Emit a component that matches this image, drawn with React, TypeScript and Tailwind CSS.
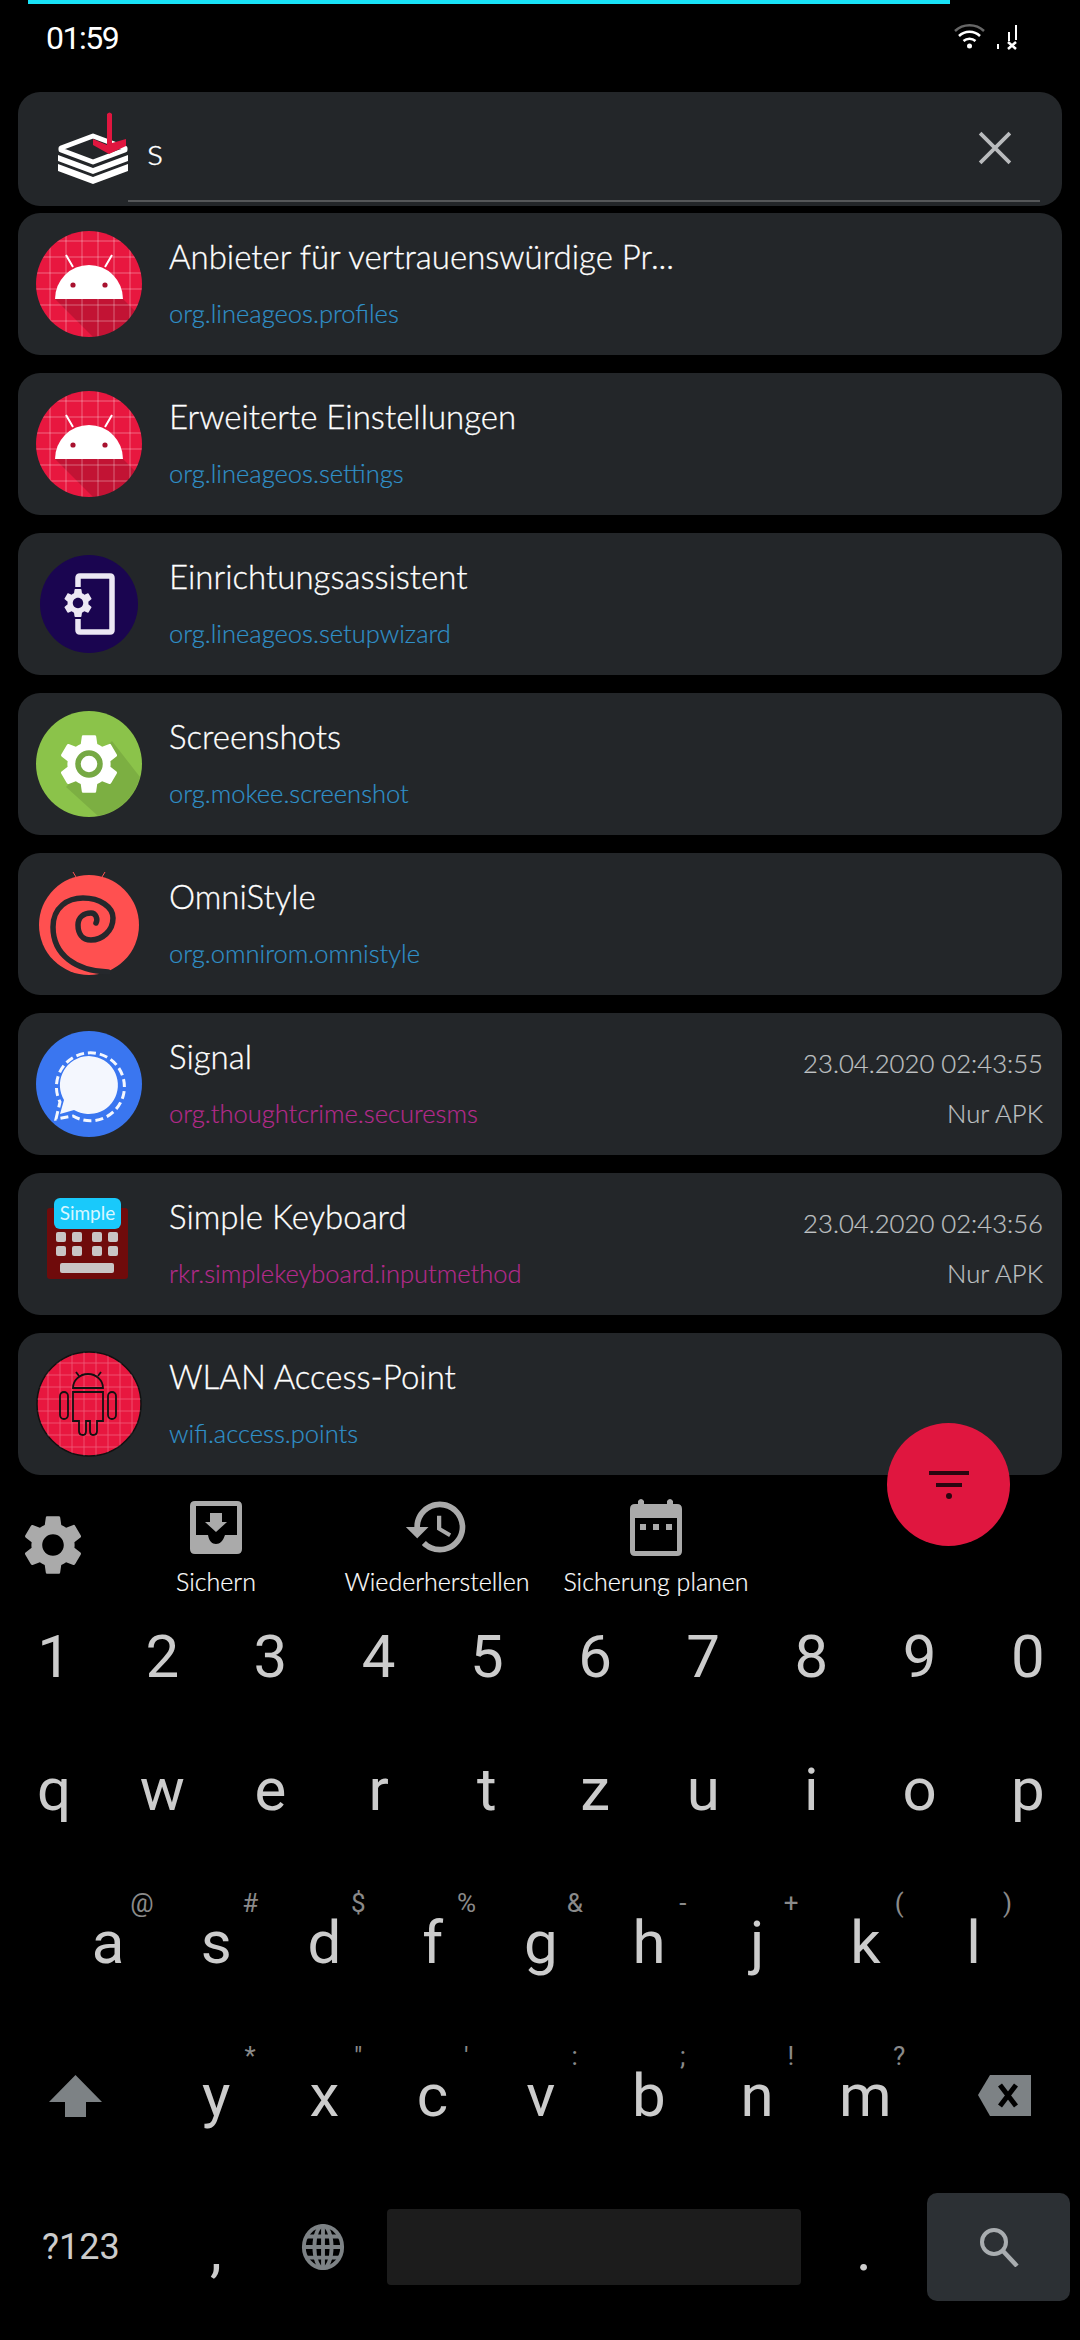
import type { ReactNode } from "react";

const appFont = "font-['Lato',sans-serif]";
const keyFont = "font-['Roboto',sans-serif]";

const gearPath =
  "M19.14 12.94c.04-.3.06-.61.06-.94 0-.32-.02-.64-.07-.94l2.03-1.58a.49.49 0 0 0 .12-.61l-1.92-3.32a.488.488 0 0 0-.59-.22l-2.39.96c-.5-.38-1.03-.7-1.62-.94l-.36-2.54a.484.484 0 0 0-.48-.41h-3.84c-.24 0-.43.17-.47.41l-.36 2.54c-.59.24-1.13.57-1.62.94l-2.39-.96c-.22-.08-.47 0-.59.22L2.74 8.87c-.12.21-.08.47.12.61l2.03 1.58c-.05.3-.09.63-.09.94s.02.64.07.94l-2.03 1.58a.49.49 0 0 0-.12.61l1.92 3.32c.12.22.37.29.59.22l2.39-.96c.5.38 1.03.7 1.62.94l.36 2.54c.05.24.24.41.48.41h3.84c.24 0 .44-.17.47-.41l.36-2.54c.59-.24 1.13-.56 1.62-.94l2.39.96c.22.08.47 0 .59-.22l1.92-3.32c.12-.22.07-.47-.12-.61l-2.01-1.58zM12 15.6c-1.98 0-3.6-1.62-3.6-3.6s1.62-3.6 3.6-3.6 3.6 1.62 3.6 3.6-1.62 3.6-3.6 3.6z";

interface AppRow {
  title: string;
  pkg: string;
  icon: ReactNode;
  magenta?: boolean;
  date?: string;
}

const RedAndroid = () => (
  <svg viewBox="0 0 106 106" className="h-[106px] w-[106px]">
    <defs>
      <clipPath id="rc">
        <circle cx="53" cy="53" r="53" />
      </clipPath>
    </defs>
    <g clipPath="url(#rc)">
      <rect width="106" height="106" fill="#e8173f" />
      <path d="M19 68 L87 68 L106 87 L106 106 L57 106 Z" fill="#000" opacity="0.16" />
      {[14, 30, 46, 62, 78, 94].map((x) => (
        <path key={x} d={`M${x} 0V106`} stroke="#fff" strokeWidth="1" opacity="0.35" />
      ))}
      {[10, 26, 42, 58, 74, 90].map((y) => (
        <path key={y} d={`M0 ${y}H106`} stroke="#fff" strokeWidth="1" opacity="0.35" />
      ))}
      <path d="M19 68 A34 34 0 0 1 87 68 Z" fill="#fff" />
      <path d="M37 36 L30 24 M69 36 L76 24" stroke="#fff" strokeWidth="2" />
      <circle cx="37" cy="54" r="2.6" fill="#a8122f" />
      <circle cx="69" cy="54" r="2.6" fill="#a8122f" />
    </g>
  </svg>
);

const SetupIcon = () => (
  <svg viewBox="0 0 106 106" className="h-[106px] w-[106px]">
    <circle cx="53" cy="53" r="49" fill="#1a0550" />
    <path d="M42 36 V27 Q42 25 44 25 H74 Q76 25 76 27 V79 Q76 81 74 81 H44 Q42 81 42 79 V68" fill="none" stroke="#ece8f4" strokeWidth="5.5" />
    <g transform="translate(24.6 34.6) scale(1.45)">
      <path d={gearPath} fill="#ece8f4" />
    </g>
  </svg>
);

const GreenGear = () => (
  <svg viewBox="0 0 106 106" className="h-[106px] w-[106px]">
    <circle cx="53" cy="53" r="53" fill="#8bc34a" />
    <path d="M30 76 L76 30 L104 66 A53 53 0 0 1 62 105 Z" fill="#000" opacity="0.1" />
    <g transform="translate(17 17) scale(3)">
      <path d={gearPath} fill="#fff" />
    </g>
    <circle cx="53" cy="53" r="11" fill="#fff" stroke="#76a944" strokeWidth="5.5" />
  </svg>
);

const Swirl = () => (
  <svg viewBox="0 0 106 106" className="h-[106px] w-[106px]">
    <path d="M37 1 L40 6 M69 1 L66 6" stroke="#ff5050" strokeWidth="1" />
    <circle cx="53" cy="54" r="50" fill="#ff5050" />
    <path
      d="M72 101 C40 100 17 84 17 56 C17 36 32 27 47 27 C64 27 77 36 77 47 C77 60 66 69 55 69 C46 69 42 62 42 54 C42 46 48 42 55 42 C60 42 62 48 60 52"
      fill="none"
      stroke="#25282c"
      strokeWidth="5.5"
      strokeLinecap="round"
    />
  </svg>
);

const SignalIcon = () => (
  <svg viewBox="0 0 106 106" className="h-[106px] w-[106px]">
    <circle cx="53" cy="53" r="53" fill="#3a76f0" />
    <path d="M24 83 L28 69 A29 29 0 1 1 38 79 Z" fill="#f4f7fe" />
    <path d="M20 88 L24 71 A34 34 0 1 1 37 85 Z" fill="none" stroke="#f4f7fe" strokeWidth="3" strokeDasharray="8 4" />
  </svg>
);

const KeyboardIcon = () => (
  <svg viewBox="0 0 106 106" className="h-[106px] w-[106px]">
    <rect x="11" y="17" width="81" height="71" rx="3" fill="#6f0b0b" />
    {[41, 55].map((y) =>
      [20, 36, 56, 72].map((x) => (
        <rect key={`${y}-${x}`} x={x} y={y} width="10" height="10" rx="2" fill="#c9c5c5" />
      )),
    )}
    <rect x="24" y="72" width="54" height="10" rx="2" fill="#c9c5c5" />
    <rect x="18" y="7" width="67" height="31" rx="6" fill="#19c9fb" />
  </svg>
);

const WifiAndroid = () => (
  <svg viewBox="0 0 106 106" className="h-[106px] w-[106px]">
    <defs>
      <clipPath id="wc">
        <circle cx="53" cy="53" r="52" />
      </clipPath>
    </defs>
    <circle cx="53" cy="53" r="52" fill="#e8173f" stroke="#111" strokeWidth="1.5" />
    <g stroke="#fff" strokeWidth="0.8" opacity="0.3" clipPath="url(#wc)">
      {[12, 24, 36, 48, 60, 72, 84, 96].map((p) => (
        <path key={p} d={`M${p} 0V106M0 ${p}H106`} />
      ))}
    </g>
    <g fill="none" stroke="#111" strokeWidth="1.8">
      <path d="M37 37 A15 14 0 0 1 67 37 Z" />
      <path d="M43 25 L40 21 M62 25 L65 21" />
      <path d="M37 41 H67 V70 H61 V80 Q61 84 57 84 Q54 84 54 80 V70 H50 V80 Q50 84 47 84 Q43 84 43 80 V70 H37 Z" />
      <rect x="24" y="41" width="8" height="27" rx="4" />
      <rect x="72" y="41" width="8" height="27" rx="4" />
    </g>
  </svg>
);

const apps: AppRow[] = [
  { title: "Anbieter für vertrauenswürdige Pr...", pkg: "org.lineageos.profiles", icon: <RedAndroid /> },
  { title: "Erweiterte Einstellungen", pkg: "org.lineageos.settings", icon: <RedAndroid /> },
  { title: "Einrichtungsassistent", pkg: "org.lineageos.setupwizard", icon: <SetupIcon /> },
  { title: "Screenshots", pkg: "org.mokee.screenshot", icon: <GreenGear /> },
  { title: "OmniStyle", pkg: "org.omnirom.omnistyle", icon: <Swirl /> },
  { title: "Signal", pkg: "org.thoughtcrime.securesms", icon: <SignalIcon />, magenta: true, date: "23.04.2020 02:43:55" },
  { title: "Simple Keyboard", pkg: "rkr.simplekeyboard.inputmethod", icon: <KeyboardIcon />, magenta: true, date: "23.04.2020 02:43:56" },
  { title: "WLAN Access-Point", pkg: "wifi.access.points", icon: <WifiAndroid /> },
];

const Row = ({ app }: { app: AppRow }) => (
  <div className="flex h-[142px] shrink-0 items-center rounded-[22px] bg-[#232629] pl-[18px] pr-[19px]">
    <div className="relative h-[106px] w-[106px] shrink-0">
      {app.icon}
      {app.title === "Simple Keyboard" && (
        <span className={`absolute left-[18px] top-[7px] flex h-[31px] w-[67px] items-center justify-center text-[19px] text-[#d8f6ff] ${appFont}`}>
          Simple
        </span>
      )}
    </div>
    <div className={`ml-[27px] flex min-w-0 flex-1 flex-col gap-[20px] pb-[3px] ${appFont}`}>
      <div className="text-[33px] font-light leading-[41px] text-white [-webkit-text-stroke:0.3px]">{app.title}</div>
      <div className={`text-[25.5px] font-light leading-[33px] [-webkit-text-stroke:0.2px] ${app.magenta ? "text-[#b52a8c]" : "text-[#3090c8]"}`}>
        {app.pkg}
      </div>
    </div>
    {app.date && (
      <div className={`flex flex-col items-end gap-[20px] pt-[7px] text-[25.7px] font-light leading-[30px] text-[#bfc1c3] [-webkit-text-stroke:0.2px] ${appFont}`}>
        <span>{app.date}</span>
        <span>Nur APK</span>
      </div>
    )}
  </div>
);

const ToolButton = ({ label, icon, width }: { label: string; icon: ReactNode; width: string }) => (
  <div className={`flex flex-col items-center ${width}`}>
    <div className="flex h-[54px] items-center">{icon}</div>
    <span className={`mt-[12px] whitespace-nowrap text-[25px] font-light leading-[30px] text-white [-webkit-text-stroke:0.2px] ${appFont}`}>{label}</span>
  </div>
);

const digits = ["1", "2", "3", "4", "5", "6", "7", "8", "9", "0"];
const qRow = ["q", "w", "e", "r", "t", "z", "u", "i", "o", "p"];
const aRow = [["a", "@"], ["s", "#"], ["d", "$"], ["f", "%"], ["g", "&"], ["h", "-"], ["j", "+"], ["k", "("], ["l", ")"]];
const yRow = [["y", "*"], ["x", '"'], ["c", "'"], ["v", ":"], ["b", ";"], ["n", "!"], ["m", "?"]];

const Key = ({ ch, hint }: { ch: string; hint?: string }) => (
  <div className={`relative flex h-full w-[108.2px] shrink-0 items-center justify-center text-[60px] font-normal leading-none text-[#cccccc] ${keyFont}`}>
    {ch}
    {hint && (
      <span className="absolute left-[88px] top-[22px] -translate-x-1/2 text-[26px] font-normal leading-[30px] text-[#8a8a8a]">{hint}</span>
    )}
  </div>
);

export default function App() {
  return (
    <div className="relative flex h-[2340px] w-[1080px] flex-col overflow-hidden bg-black">
      {/* status bar */}
      <div className="ml-[28px] h-[4px] w-[922px] shrink-0 bg-[#19e3f8]" />
      <div className="flex h-[88px] shrink-0 items-start justify-between pl-[46px] pr-[56px] pt-[16px]">
        <span className={`text-[32px] leading-[36px] tracking-[-1.5px] text-white ${keyFont}`}>01:59</span>
        <svg viewBox="0 0 70 30" className="mt-[2px] h-[30px] w-[70px]">
          <g fill="none">
            <path d="M1 9 A21 21 0 0 1 30 9" stroke="#666" strokeWidth="2.5" />
            <path d="M5 14 A15 15 0 0 1 26 14" stroke="#fff" strokeWidth="2.5" />
            <path d="M9.5 19 A9 9 0 0 1 21.5 19" stroke="#fff" strokeWidth="2.5" />
          </g>
          <circle cx="15.5" cy="24" r="2.5" fill="#fff" />
          <path d="M44 27V22M55 19V10M62 18V3" stroke="#fff" strokeWidth="2" />
          <path d="M54 20L62 27M62 20L54 27" stroke="#fff" strokeWidth="2.5" />
        </svg>
      </div>

      {/* list */}
      <div className="flex flex-col gap-[18px] px-[18px]">
        <div className="relative -mb-[11px] flex h-[114px] shrink-0 items-center rounded-[22px] bg-[#232629] pr-[50px]">
          <svg viewBox="0 0 72 74" className="ml-[39px] mt-[20px] h-[74px] w-[72px] shrink-0 self-start">
            <path d="M36 24 L68 36 V38 L36 50 L4 38 V36 Z" fill="#232629" stroke="#fff" strokeWidth="5" strokeLinejoin="round" />
            <path d="M1 43 L36 56 L71 43 V49 L36 62 L1 49 Z" fill="#fff" />
            <path d="M1 52 L36 65 L71 52 V59 L36 72 L1 59 Z" fill="#fff" />
            <path d="M36 27 L50 33 V2 Q52.5 -1 55 2 V31 L69 27 V34 L52 42 L36 33 Z" fill="#e0163f" />
          </svg>
          <span className={`ml-[18px] mt-[2px] text-[38px] font-light leading-none text-white [-webkit-text-stroke:0.3px] ${appFont}`}>s</span>
          <div className="mb-[2px] ml-auto flex h-[34px] w-[34px] items-center justify-center">
            <svg viewBox="0 0 32 32" className="h-[34px] w-[34px]">
              <path d="M2 2L30 30M30 2L2 30" stroke="#b9bbbd" strokeWidth="3.5" />
            </svg>
          </div>
          <div className="absolute bottom-[4px] left-[110px] right-[22px] h-[2px] bg-[#555759]" />
        </div>
        {apps.map((app) => (
          <Row key={app.pkg} app={app} />
        ))}
      </div>

      {/* toolbar */}
      <div className="flex h-[123px] shrink-0 items-start pl-[24px] pt-[25px]">
        <svg viewBox="0 0 24 24" className="-ml-[7px] mt-[9px] h-[72px] w-[72px] shrink-0">
          <path fill="#aaaaaa" d={gearPath} />
        </svg>
        <div className="ml-[51px] flex items-start">
          <ToolButton
            label="Sichern"
            width="w-[152px]"
            icon={
              <svg viewBox="0 0 52 53" className="h-[53px] w-[52px]">
                <path
                  fill="#aaaaaa"
                  fillRule="evenodd"
                  d="M5 0H47Q52 0 52 5V48Q52 53 47 53H5Q0 53 0 48V5Q0 0 5 0ZM6 5V34H18C19 40 22 43 26 43S33 40 35 34H47V5ZM20 12H32V21H37L26 31L15 21H20Z"
                />
              </svg>
            }
          />
          <ToolButton
            label="Wiederherstellen"
            width="w-[190px] ml-[50px]"
            icon={
              <svg viewBox="0 0 24 24" className="h-[68px] w-[68px]">
                <path
                  fill="#aaaaaa"
                  d="M13 3c-4.97 0-9 4.03-9 9H1l3.89 3.89.07.14L9 12H6c0-3.87 3.13-7 7-7s7 3.13 7 7-3.13 7-7 7c-1.93 0-3.68-.79-4.94-2.06l-1.42 1.42C8.27 19.99 10.51 21 13 21c4.97 0 9-4.03 9-9s-4.03-9-9-9zm-1 5v5l4.28 2.54.72-1.21-3.5-2.08V8H12z"
                />
              </svg>
            }
          />
          <ToolButton
            label="Sicherung planen"
            width="w-[190px] ml-[29px]"
            icon={
              <svg viewBox="0 0 52 58" className="h-[58px] w-[52px]">
                <path
                  fill="#aaaaaa"
                  fillRule="evenodd"
                  d="M8 3Q11 -1 14 3V6H37V3Q40 -1 43 3V6H47Q52 6 52 11V53Q52 58 47 58H5Q0 58 0 53V11Q0 6 5 6H8ZM5 20V53H47V20ZM10 26H16V32H10ZM23 26H29V32H23ZM36 26H42V32H36Z"
                />
              </svg>
            }
          />
        </div>
      </div>

      {/* keyboard */}
      <div className="flex flex-1 flex-col pt-[3px]">
        <div className="flex h-[112px]">
          {digits.map((d) => (
            <Key key={d} ch={d} />
          ))}
        </div>
        <div className="flex h-[153px]">
          {qRow.map((d) => (
            <Key key={d} ch={d} />
          ))}
        </div>
        <div className="flex h-[153px] pl-[54px]">
          {aRow.map(([c, h]) => (
            <Key key={c} ch={c} hint={h} />
          ))}
        </div>
        <div className="flex h-[153px] items-center">
          <svg viewBox="0 0 53 42" className="ml-[49px] h-[42px] w-[53px] shrink-0">
            <path d="M26.5 0L53 27H37V42H16V27H0Z" fill="#7d8285" />
          </svg>
          <div className="ml-[60px] flex h-full shrink-0">
            {yRow.map(([c, h]) => (
              <Key key={c} ch={c} hint={h} />
            ))}
          </div>
          <svg viewBox="0 0 53 41" className="ml-[59px] h-[41px] w-[53px] shrink-0">
            <path d="M12 0H53V41H12L0 20Z" fill="#7d8285" />
            <path d="M22 10L38 31M38 10L22 31" stroke="#000" strokeWidth="5" />
          </svg>
        </div>
        <div className={`flex h-[150px] items-center ${keyFont} font-normal text-[#cccccc]`}>
          <span className="ml-[42px] w-[100px] text-[36px] leading-none">?123</span>
          <span className="ml-[64px] mt-[6px] w-[20px] text-center text-[60px] leading-none">,</span>
          <svg viewBox="0 0 44 48" className="ml-[75px] h-[46px] w-[44px] shrink-0">
            <g fill="none" stroke="#7d8285" strokeWidth="4">
              <ellipse cx="22" cy="24" rx="20" ry="22" />
              <ellipse cx="22" cy="24" rx="9" ry="22" />
              <path d="M22 2V46M2 24H42M5 13H39M5 35H39" />
            </g>
          </svg>
          <div className="ml-[42px] h-[76px] w-[414px] shrink-0 rounded-[4px] bg-[#1c1c1c]" />
          <span className="ml-[55px] mt-[6px] w-[16px] text-center text-[60px] leading-none">.</span>
          <div className="ml-[55px] flex h-[108px] w-[143px] shrink-0 items-center justify-center rounded-[10px] bg-[#2c3034]">
            <svg viewBox="0 0 40 40" className="h-[40px] w-[40px]">
              <circle cx="15" cy="15" r="12" fill="none" stroke="#a9adb0" strokeWidth="4" />
              <path d="M24 24L38 39" stroke="#a9adb0" strokeWidth="4.5" />
            </svg>
          </div>
        </div>
      </div>

      {/* filter fab */}
      <div className="absolute left-[887px] top-[1423px] flex h-[123px] w-[123px] items-center justify-center rounded-full bg-[#e0163f]">
        <svg viewBox="0 0 40 28" className="h-[28px] w-[40px]">
          <path d="M0 2H40M7 14H33" stroke="#2a0610" strokeWidth="4" />
          <circle cx="20" cy="25" r="3" fill="#2a0610" />
        </svg>
      </div>
    </div>
  );
}
